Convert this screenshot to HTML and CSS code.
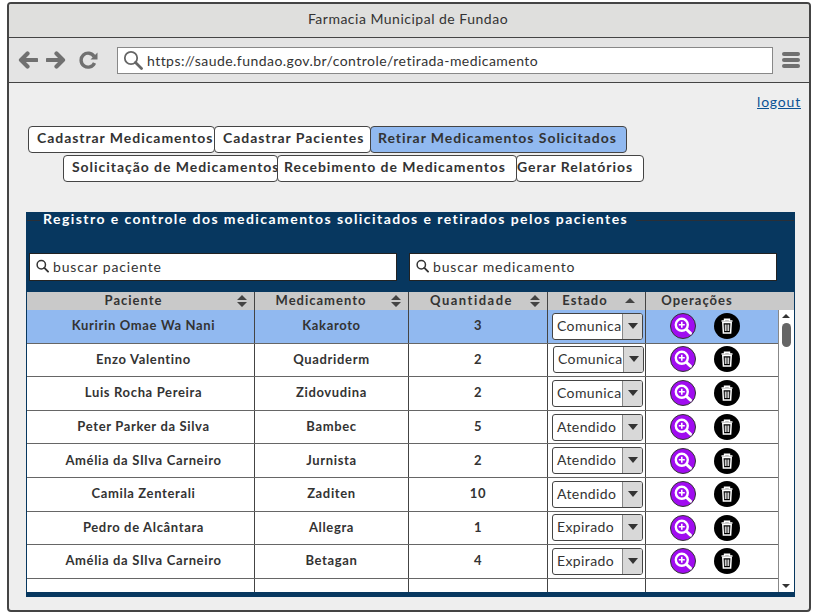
FILE: index.html
```html
<!DOCTYPE html>
<html lang="pt">
<head>
  <meta charset="UTF-8" />
  <title>Farmacia Municipal de Fundao</title>
  <link rel="stylesheet" href="styles.css">
</head>
<body>
  <svg class="defs" width="0" height="0">
    <symbol id="zoom-icon" viewBox="0 0 26 26">
      <circle cx="13" cy="13" r="12.5" fill="#a00cf0" stroke="#333" stroke-width="1"/>
      <path d="M16 16l4.500 4.200" stroke="#fff" stroke-width="3" stroke-linecap="round"/>
      <circle cx="11.800" cy="11.800" r="6" fill="#a00cf0" stroke="#fff" stroke-width="2.400"/>
      <path d="M8.800 11.800h6M11.800 8.800v6" stroke="#fff" stroke-width="1.600"/>
    </symbol>
    <symbol id="trash-icon" viewBox="0 0 26 26">
      <circle cx="13" cy="13" r="13" fill="#000"/>
      <path d="M7.500 8h11M10.500 8V6.300h5V8" fill="none" stroke="#fff" stroke-width="1.400"/>
      <path d="M8.800 9.500h8.400l-.6 10.500H9.400z" fill="none" stroke="#fff" stroke-width="1.500"/>
      <path d="M11.300 11.500v6.500M13 11.500v6.500M14.700 11.500v6.500" stroke="#fff" stroke-width="1"/>
    </symbol>
    <symbol id="sort-icon" viewBox="0 0 10 12">
      <path d="M5 0l5 5H0zM0 7h10l-5 5z" fill="#444"/>
    </symbol>
    <symbol id="search-icon" viewBox="0 0 14 14">
      <circle cx="5.700" cy="5.700" r="4.500" fill="none" stroke="#333" stroke-width="1.600"/>
      <path d="M9 9l4 4" stroke="#333" stroke-width="2" stroke-linecap="round"/>
    </symbol>
  </svg>

  <div class="window">
    <div class="title-bar">Farmacia Municipal de Fundao</div>

    <div class="toolbar">
      <svg class="nav-icon" viewBox="0 0 20 18"><path d="M9.500 2.500L3 9l6.500 6.500M4 9h14.500" fill="none" stroke="#707070" stroke-width="4.200" stroke-linejoin="round" stroke-linecap="round"/></svg>
      <svg class="nav-icon" viewBox="0 0 20 18"><path d="M10.500 2.500L17 9l-6.500 6.500M16 9H1.500" fill="none" stroke="#707070" stroke-width="4.200" stroke-linejoin="round" stroke-linecap="round"/></svg>
      <svg class="nav-icon reload" viewBox="0 0 20 18"><path d="M15.500 12a7 7 0 1 1-.4-6.500" fill="none" stroke="#707070" stroke-width="3.400"/><path d="M18.500 1.500v7h-7z" fill="#707070"/></svg>
      <div class="address">
        <svg class="address-icon" viewBox="0 0 20 20"><circle cx="8" cy="8" r="6.200" fill="none" stroke="#666" stroke-width="1.800"/><path d="M12.500 12.500l6 6" stroke="#666" stroke-width="2.800" stroke-linecap="round"/></svg>
        <span>https://saude.fundao.gov.br/controle/retirada-medicamento</span>
      </div>
      <div class="menu-icon"><i></i><i></i><i></i></div>
    </div>

    <div class="content">
      <div class="logout-row"><a class="logout" href="#">logout</a></div>

      <div class="tabs tabs-first">
        <a class="tab tab-a">Cadastrar Medicamentos</a>
        <a class="tab tab-b">Cadastrar Pacientes</a>
        <a class="tab tab-c active">Retirar Medicamentos Solicitados</a>
      </div>
      <div class="tabs tabs-second">
        <a class="tab tab-d">Solicitação de Medicamentos</a>
        <a class="tab tab-e">Recebimento de Medicamentos</a>
        <a class="tab tab-f">Gerar Relatórios</a>
      </div>

      <section class="panel">
        <h2 class="panel-title"><span>Registro e controle dos medicamentos solicitados e retirados pelos pacientes</span></h2>

        <div class="filters">
          <label class="search"><svg><use href="#search-icon"/></svg>buscar paciente</label>
          <label class="search"><svg><use href="#search-icon"/></svg>buscar medicamento</label>
        </div>

        <div class="grid-head">
          <div class="head-cell">Paciente<svg class="sort"><use href="#sort-icon"/></svg></div>
          <div class="head-cell">Medicamento<svg class="sort"><use href="#sort-icon"/></svg></div>
          <div class="head-cell">Quantidade<svg class="sort"><use href="#sort-icon"/></svg></div>
          <div class="head-cell">Estado<b class="sort-up"></b></div>
          <div class="head-cell">Operações</div>
        </div>

        <div class="grid-body">
          <div class="rows">
            <div class="row selected">
              <div class="cell">Kuririn Omae Wa Nani</div><div class="cell">Kakaroto</div><div class="cell">3</div>
              <div class="cell"><div class="select"><span>Comunica</span><b></b></div></div>
              <div class="cell ops"><svg><use href="#zoom-icon"/></svg><svg><use href="#trash-icon"/></svg></div>
            </div>
            <div class="row row-nudged">
              <div class="cell">Enzo Valentino</div><div class="cell">Quadriderm</div><div class="cell">2</div>
              <div class="cell"><div class="select"><span>Comunica</span><b></b></div></div>
              <div class="cell ops"><svg><use href="#zoom-icon"/></svg><svg><use href="#trash-icon"/></svg></div>
            </div>
            <div class="row">
              <div class="cell">Luis Rocha Pereira</div><div class="cell">Zidovudina</div><div class="cell">2</div>
              <div class="cell"><div class="select"><span>Comunica</span><b></b></div></div>
              <div class="cell ops"><svg><use href="#zoom-icon"/></svg><svg><use href="#trash-icon"/></svg></div>
            </div>
            <div class="row">
              <div class="cell">Peter Parker da Silva</div><div class="cell">Bambec</div><div class="cell">5</div>
              <div class="cell"><div class="select"><span>Atendido</span><b></b></div></div>
              <div class="cell ops"><svg><use href="#zoom-icon"/></svg><svg><use href="#trash-icon"/></svg></div>
            </div>
            <div class="row">
              <div class="cell">Amélia da SIlva Carneiro</div><div class="cell">Jurnista</div><div class="cell">2</div>
              <div class="cell"><div class="select"><span>Atendido</span><b></b></div></div>
              <div class="cell ops"><svg><use href="#zoom-icon"/></svg><svg><use href="#trash-icon"/></svg></div>
            </div>
            <div class="row">
              <div class="cell">Camila Zenterali</div><div class="cell">Zaditen</div><div class="cell">10</div>
              <div class="cell"><div class="select"><span>Atendido</span><b></b></div></div>
              <div class="cell ops"><svg><use href="#zoom-icon"/></svg><svg><use href="#trash-icon"/></svg></div>
            </div>
            <div class="row">
              <div class="cell">Pedro de Alcântara</div><div class="cell">Allegra</div><div class="cell">1</div>
              <div class="cell"><div class="select"><span>Expirado</span><b></b></div></div>
              <div class="cell ops"><svg><use href="#zoom-icon"/></svg><svg><use href="#trash-icon"/></svg></div>
            </div>
            <div class="row">
              <div class="cell">Amélia da SIlva Carneiro</div><div class="cell">Betagan</div><div class="cell">4</div>
              <div class="cell"><div class="select"><span>Expirado</span><b></b></div></div>
              <div class="cell ops"><svg><use href="#zoom-icon"/></svg><svg><use href="#trash-icon"/></svg></div>
            </div>
            <div class="row row-empty">
              <div class="cell"></div><div class="cell"></div><div class="cell"></div><div class="cell"></div><div class="cell"></div>
            </div>
          </div>
          <div class="scrollbar">
            <i class="arrow-up"></i>
            <i class="thumb"></i>
            <i class="arrow-down"></i>
          </div>
        </div>
      </section>
    </div>
  </div>
</body>
</html>
```

FILE: styles.css
```css
* {
  box-sizing: border-box;
}
body {
  margin: 0;
  background-color: #fff;
  font-family: 'Lato', 'Noto Sans', sans-serif;
  color: #333;
}
.defs {
  position: absolute;
}
.window {
  width: 804px;
  height: 610px;
  margin: 2px 0 0 7px;
  border: 2px solid #444;
  border-radius: 4px;
  background-color: #eee;
  overflow: hidden;
}
.title-bar {
  height: 34px;
  border-bottom: 1px solid #444;
  background-color: #dfdfdd;
  padding-right: 2px;
  text-align: center;
  font-size: 14px;
  line-height: 29px;
  letter-spacing: 0.5px;
}
.toolbar {
  display: flex;
  align-items: center;
  height: 45px;
  border-bottom: 1px solid #444;
  background-color: #e4e4e4;
  padding-left: 9px;
}
.nav-icon {
  width: 20px;
  height: 18px;
  margin-right: 8px;
}
.reload {
  margin-left: 5px;
  margin-right: 18px;
}
.address {
  display: flex;
  align-items: center;
  gap: 4px;
  width: 656px;
  height: 27px;
  border: 1px solid #888;
  background-color: #fff;
  padding-left: 5px;
  font-size: 14px;
  letter-spacing: 0.45px;
}
.address-icon {
  width: 20px;
  height: 20px;
}
.menu-icon {
  display: flex;
  flex-direction: column;
  gap: 2px;
  margin-left: 9px;
}
.menu-icon i {
  width: 18px;
  height: 4px;
  border-radius: 2px;
  background-color: #707070;
}
.content {
  padding: 0 8px 0 17px;
}
.logout-row {
  display: flex;
  justify-content: flex-end;
  height: 43px;
  padding-top: 10px;
}
.logout {
  color: #0b5394;
  font-size: 14px;
  text-decoration: underline;
  letter-spacing: 0.8px;
}
.tabs {
  display: flex;
  height: 27px;
}
.tabs-first {
  margin-left: 2px;
}
.tabs-second {
  margin-top: 2px;
  margin-left: 37px;
}
.tab {
  height: 27px;
  margin-right: -1px;
  border: 1px solid #444;
  border-radius: 4px;
  background-color: #fff;
  padding-left: 8px;
  font-size: 14px;
  font-weight: 700;
  line-height: 21px;
  letter-spacing: 0.95px;
  white-space: nowrap;
}
.tab.active {
  background-color: #91b9f0;
  padding-left: 7px;
}
.tab-a { width: 187px; }
.tab-b { width: 157px; }
.tab-c { width: 257px; }
.tab-d { width: 215px; }
.tab-e { width: 240px; padding-left: 6px; }
.tab-f { width: 128px; padding-left: 0; }
.panel {
  height: 385px;
  margin: 30px 0 0 0;
  width: 769px;
  background-color: #07375f;
  padding: 0 1px;
}
.panel-title {
  display: flex;
  align-items: flex-start;
  margin: 0;
  height: 41px;
  color: #fff;
  font-size: 14px;
  font-weight: 700;
  line-height: 14px;
  letter-spacing: 1.44px;
  white-space: nowrap;
}
.panel-title::before,
.panel-title::after {
  content: "";
  height: 1px;
  margin-top: 8px;
  background-color: #2b2f36;
}
.panel-title::before {
  width: 13px;
}
.panel-title::after {
  flex: 1;
}
.panel-title span {
  padding: 0 8px 0 3px;
}
.filters {
  display: flex;
  gap: 12px;
  padding-left: 2px;
}
.search {
  display: flex;
  align-items: center;
  gap: 4px;
  width: 368px;
  height: 28px;
  border: 1px solid #222;
  background-color: #fff;
  padding-left: 6px;
  padding-bottom: 2px;
  font-size: 14px;
  letter-spacing: 0.85px;
}
.search svg {
  width: 13px;
  height: 14px;
}
.grid-head,
.row {
  display: grid;
  grid-template-columns: 228px 154px 139px 98px 1fr;
}
.grid-head {
  height: 18px;
  margin-top: 11px;
  background-color: #c9c9c9;
}
.head-cell {
  position: relative;
  border-right: 1px solid #444;
  padding-right: 14px;
  text-align: center;
  font-size: 13px;
  font-weight: 700;
  line-height: 17px;
  letter-spacing: 1px;
}
.head-cell:last-child {
  border-right: 0;
  padding-right: 46px;
}
.head-cell:nth-child(2) {
  padding-right: 21px;
}
.head-cell:nth-child(3) {
  padding-right: 13px;
  letter-spacing: 1.5px;
}
.head-cell:nth-child(4) {
  padding-right: 23px;
}
.sort {
  position: absolute;
  top: 3px;
  right: 7px;
  width: 10px;
  height: 12px;
}
.sort-up {
  position: absolute;
  top: 6px;
  right: 10px;
  border-left: 5px solid transparent;
  border-right: 5px solid transparent;
  border-bottom: 5px solid #444;
}
.grid-body {
  display: flex;
  height: 282px;
  background-color: #fff;
  overflow: hidden;
}
.rows {
  flex: 1;
  min-width: 0;
}
.row {
  height: 33.6px;
  border-bottom: 1px solid #666;
  background-color: #fff;
}
.row.selected {
  background-color: #91b9f0;
}
.row-empty {
  height: 20px;
  border-bottom: 0;
}
.cell {
  display: flex;
  align-items: center;
  justify-content: center;
  border-right: 1px solid #444;
  padding-bottom: 2px;
  font-size: 13px;
  font-weight: 700;
  letter-spacing: 0.65px;
}
.cell:first-child {
  padding-left: 6px;
}
.cell:last-child {
  border-right: 0;
}
.select {
  display: flex;
  width: 91px;
  height: 27px;
  margin-left: 2px;
  margin-top: 2px;
  border: 1px solid #444;
  border-radius: 3px;
  background-color: #fff;
  overflow: hidden;
  font-weight: 400;
  font-size: 14px;
  letter-spacing: 0.4px;
}
.select span {
  width: 69px;
  padding-left: 4px;
  white-space: nowrap;
  line-height: 24px;
}
.select b {
  position: relative;
  flex: 1;
  border-left: 1px solid #888;
  background-color: #d8d8d8;
}
.select b::after {
  content: "";
  position: absolute;
  top: 9px;
  left: 5px;
  border-left: 5.5px solid transparent;
  border-right: 5.5px solid transparent;
  border-top: 6px solid #333;
}
.row-nudged .select {
  margin-left: 4px;
}
.row-nudged .ops svg {
  margin-bottom: 2px;
}
.ops {
  justify-content: flex-start;
  gap: 18px;
  padding-left: 24px;
  padding-bottom: 0;
}
.ops svg {
  width: 26px;
  height: 26px;
}
.scrollbar {
  position: relative;
  width: 16px;
  border-left: 1px solid #888;
  background-color: #fff;
}
.arrow-up,
.arrow-down {
  position: absolute;
  left: 3px;
  border-left: 4px solid transparent;
  border-right: 4px solid transparent;
}
.arrow-up {
  top: 4px;
  border-bottom: 4px solid #333;
}
.arrow-down {
  bottom: 4px;
  border-top: 4px solid #333;
}
.thumb {
  position: absolute;
  top: 13px;
  left: 3px;
  width: 9px;
  height: 24px;
  border-radius: 5px;
  background-color: #666;
}
```
